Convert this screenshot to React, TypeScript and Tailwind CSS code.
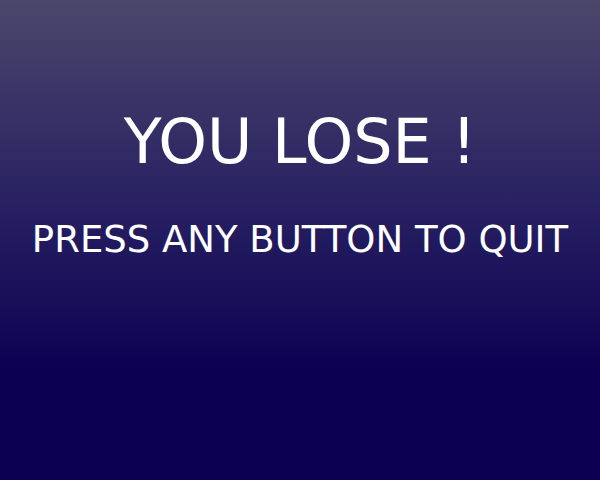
export default function App() {
  return (
    <div className="w-[600px] h-[480px] bg-[linear-gradient(to_bottom,#4b476b_0%,#2a2363_40%,#0b0052_78%,#0b0052_100%)] flex flex-col items-center text-white font-['DejaVu_Sans',sans-serif]">
      <h1 className="mt-[104px] text-[62px] leading-[76px]">YOU LOSE !</h1>
      <p className="mt-[38px] text-[37px] leading-[44px]">PRESS ANY BUTTON TO QUIT</p>
    </div>
  );
}
